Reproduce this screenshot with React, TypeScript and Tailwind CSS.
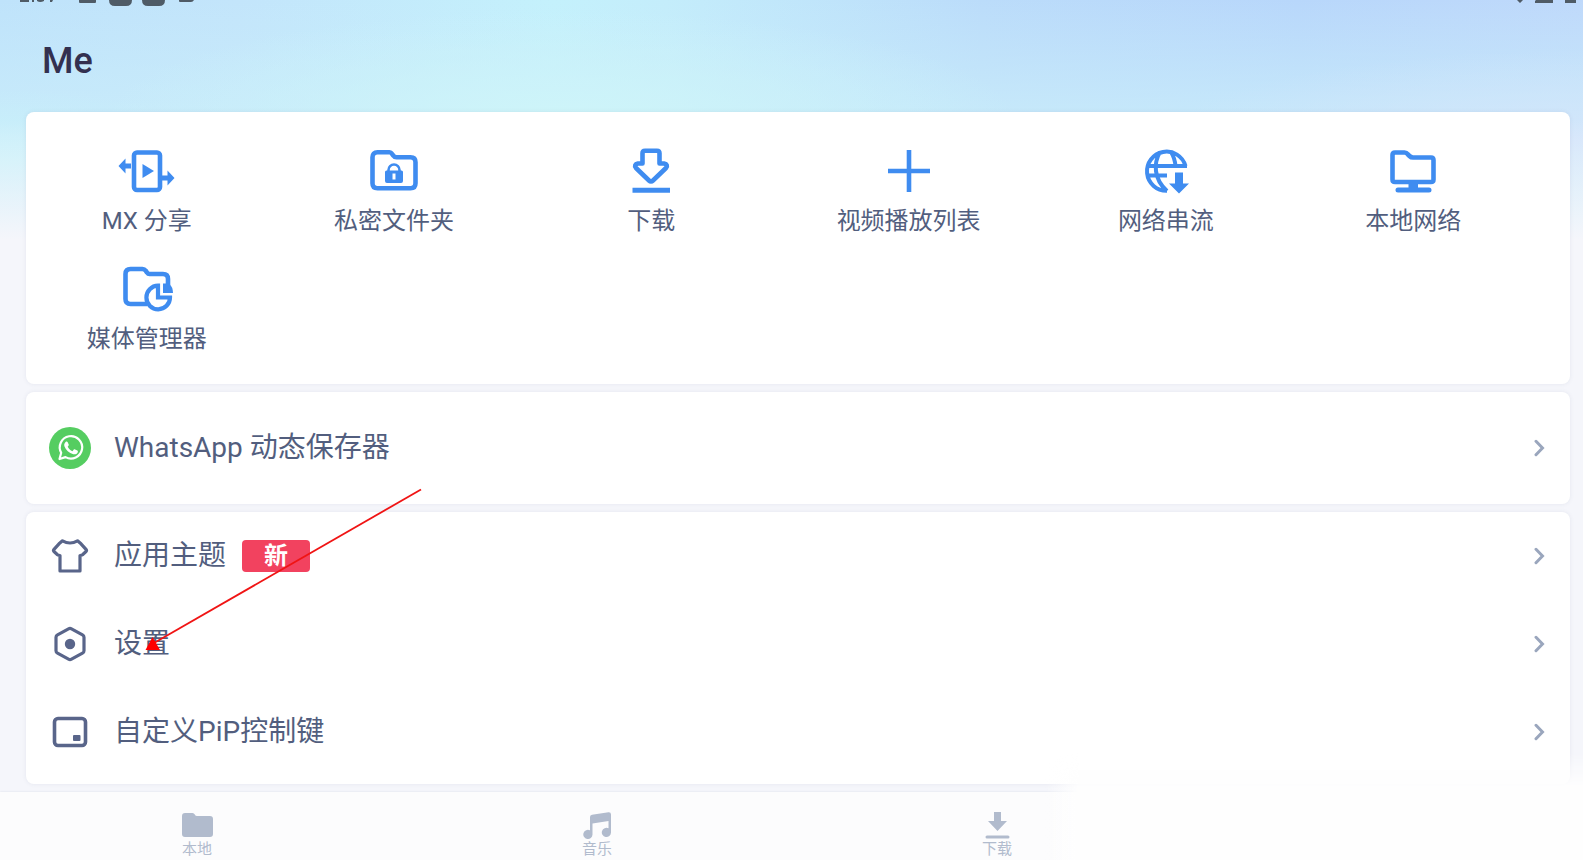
import type { ReactNode } from "react";

const blue = "#3f8cf0";
const slate = "#59658a";

function ShareIcon() {
  return (
    <svg width="60" height="48" viewBox="0 0 60 48" fill="none" aria-hidden="true">
      <rect x="17" y="5.500" width="26" height="37.500" rx="3" stroke={blue} strokeWidth="4.600" />
      <path d="M25.500 17v14l11.500-7z" fill={blue} />
      <path d="M1.500 19l7-7.500V16.500H14v5H8.500V26.500zM57.500 31l-7-7.500v5H45v5h5.500v5z" fill={blue} />
    </svg>
  );
}

function LockFolderIcon() {
  return (
    <svg width="60" height="48" viewBox="0 0 60 48" fill="none" aria-hidden="true">
      <path d="M13.500 5.300h12q1.500 0 2.500 1.500l1.500 2q1 1.500 3 1.500h14q5 0 5 5v21q0 5-5 5h-33q-5 0-5-5v-26q0-5 5-5z" stroke={blue} strokeWidth="4.600" strokeLinejoin="round" />
      <path d="M24.500 25v-2a5.500 5.500 0 0 1 11 0v2" stroke={blue} strokeWidth="2.600" />
      <path fillRule="evenodd" d="M22.500 23.500h15q1.500 0 1.500 1.500v9q0 2-2 2H23q-2 0-2-2v-9q0-1.500 1.500-1.500zM28.500 26.500v6h3v-6z" fill={blue} />
    </svg>
  );
}

function DownloadIcon() {
  return (
    <svg width="60" height="48" viewBox="0 0 60 48" fill="none" aria-hidden="true">
      <path d="M24 3.700h12q2.500 0 2.500 2.500V16.500h4.500q4.500 1 2 4.500L32 33.500q-2 2-4 0L15 21q-2.500-3.500 2-4.500h4.500V6.200q0-2.500 2.500-2.500z" stroke={blue} strokeWidth="4.600" strokeLinejoin="round" />
      <path d="M11.500 43.200H49" stroke={blue} strokeWidth="5" />
    </svg>
  );
}

function PlusIcon() {
  return (
    <svg width="60" height="48" viewBox="0 0 60 48" fill="none" aria-hidden="true">
      <path d="M30 3v42M9 24h42" stroke={blue} strokeWidth="4.600" />
    </svg>
  );
}

function StreamIcon() {
  return (
    <svg width="60" height="48" viewBox="0 0 60 48" fill="none" aria-hidden="true">
      <path
        d="M31 43.800A19.600 19.600 0 1 1 49.500 19M10.500 19H51M10.500 28.500H31M24 5c-6.500 11-6.500 27 7 39M35 5c2.500 4 4 8 4.500 14"
        stroke={blue}
        strokeWidth="4"
      />
      <path d="M39 25.500h8v11h6L43 46.500l-10-10h6z" fill={blue} />
    </svg>
  );
}

function NetworkIcon() {
  return (
    <svg width="60" height="48" viewBox="0 0 60 48" fill="none" aria-hidden="true">
      <path d="M12 5.500h9.500q2 0 3.500 2l1.500 1.500q1.500 1.500 3.500 1.500h18q2.500 0 2.500 2.500v19.500q0 2.500-2.500 2.500H12q-2.500 0-2.500-2.500V8q0-2.500 2.500-2.500z" stroke={blue} strokeWidth="4.600" strokeLinejoin="round" />
      <path d="M25.500 36H35v6h-9.500zM15 40.500h31q2.500 0 2.500 2.500T46 45.500H15q-2.500 0-2.500-2.500t2.500-2.500z" fill={blue} />
    </svg>
  );
}

function MediaManagerIcon() {
  return (
    <svg width="60" height="48" viewBox="0 0 60 48" fill="none" aria-hidden="true">
      <path d="M30 39H13.500q-5 0-5-5V9q0-5 5-5h12q2 0 3 1.500l1.500 2Q31 9 32.500 9H46q5 0 5 5v6" stroke={blue} strokeWidth="4.600" />
      <path d="M41 20.700A11.800 11.800 0 1 0 53 32.500H41z" stroke={blue} strokeWidth="4.200" />
      <path d="M46 18.500h6q4 3.500 4 9.500H46z" fill={blue} />
    </svg>
  );
}

function WhatsAppIcon() {
  return (
    <svg width="42" height="42" viewBox="0 0 42 42" fill="none" aria-hidden="true">
      <circle cx="21" cy="21" r="21" fill="#55cd61" />
      <path d="M10.500 32l1.700-6.200a11.200 11.200 0 1 1 4.300 4.300z" stroke="#fff" strokeWidth="2.200" strokeLinejoin="round" />
      <path d="M16.600 15c.8-.8 1.700-.6 2.100.3l1 2.300c.3.700-.2 1.200-1 2.200 1.200 2.200 2.600 3.500 4.800 4.400l1.300-1.600c.4-.5.800-.5 1.300-.2l2.200 1.100c.7.400.7.900.4 1.900-.6 1.500-2.700 2.200-4.300 1.800-4.500-1.100-7.500-4-9-7.900-.5-1.600 0-3.200 1.200-4.300z" fill="#fff" />
    </svg>
  );
}

function ThemeIcon() {
  return (
    <svg width="42" height="42" viewBox="0 0 42 42" fill="none" aria-hidden="true">
      <path
        d="M13.500 5.800q7.500 4.400 15 0l3.500 3 5 5.500q1 1.200 0 2.200l-3.500 3.200q-1 .8-2.500.8v15.500H11V20.500q-1.500 0-2.500-.8L5 16.500q-1-1 0-2.200l5-5.500z"
        stroke={slate}
        strokeWidth="3.200"
        strokeLinejoin="round"
      />
    </svg>
  );
}

function SettingsIcon() {
  return (
    <svg width="42" height="42" viewBox="0 0 42 42" fill="none" aria-hidden="true">
      <path d="M19.500 5.800q1.500-.8 3 0l11 6q1.500.8 1.500 2.500v13.400q0 1.700-1.500 2.500l-11 6q-1.500.8-3 0l-11-6Q7 29.400 7 27.700V14.300q0-1.700 1.500-2.500z" stroke={slate} strokeWidth="3.200" />
      <circle cx="21" cy="21" r="5.200" fill={slate} />
    </svg>
  );
}

function PipIcon() {
  return (
    <svg width="42" height="42" viewBox="0 0 42 42" fill="none" aria-hidden="true">
      <rect x="5.500" y="7.500" width="31" height="27" rx="3.500" stroke={slate} strokeWidth="3.600" />
      <rect x="24" y="24" width="7.500" height="6" rx="1" fill={slate} />
    </svg>
  );
}

function Chevron() {
  return (
    <svg width="12" height="18" viewBox="0 0 12 18" fill="none" aria-hidden="true">
      <path d="M2 2.300L8.500 9 2 15.700" stroke="#9aa6bd" strokeWidth="3" strokeLinecap="round" />
    </svg>
  );
}

const shortcuts: { label: string; icon: ReactNode }[] = [
  { label: "MX 分享", icon: <ShareIcon /> },
  { label: "私密文件夹", icon: <LockFolderIcon /> },
  { label: "下载", icon: <DownloadIcon /> },
  { label: "视频播放列表", icon: <PlusIcon /> },
  { label: "网络串流", icon: <StreamIcon /> },
  { label: "本地网络", icon: <NetworkIcon /> },
  { label: "媒体管理器", icon: <MediaManagerIcon /> },
];

const tabs: { label: string; icon: ReactNode }[] = [
  {
    label: "本地",
    icon: <path d="M4 1h7.500q1.500 0 2.300 1.500.7 1.500 2.200 1.500h13q3 0 3 3v15q0 3-3 3H4q-3 0-3-3V4q0-3 3-3z" />,
  },
  {
    label: "音乐",
    icon: (
      <path d="M9 5q0-2 2-2.300L27.500.200Q30 0 30 2.500V20.500a4.600 4.600 0 1 1-2.500-4.200V9L11.500 11.500V22.500a4.600 4.600 0 1 1-2.500-4.200z" />
    ),
  },
  { label: "下载", icon: <path d="M13 0h7v9h6L16.500 19 7 9h6zM6 23.500h21a1.500 1.500 0 0 1 0 3H6a1.500 1.500 0 0 1 0-3z" /> },
];

function Row({ icon, label, badge, tall }: { icon: ReactNode; label: string; badge?: string; tall?: boolean }) {
  return (
    <button type="button" className={`flex w-full items-center pl-[23px] pr-6 text-left ${tall ? "h-28" : "h-22"}`}>
      {icon}
      <span className="ml-[23px] text-[28px] leading-10">{label}</span>
      {badge && (
        <span className="ml-4 flex h-8 w-17 items-center justify-center rounded bg-[#f2425f] text-2xl font-bold text-white">
          {badge}
        </span>
      )}
      <span className="ml-auto">
        <Chevron />
      </span>
    </button>
  );
}

function Card({ children }: { children: ReactNode }) {
  return <section className="rounded-lg bg-white shadow-[0_0_4px_rgba(80,90,130,0.10)]">{children}</section>;
}

export default function App() {
  return (
    <div className="relative flex min-h-screen flex-col overflow-hidden bg-[#f5f6fb] font-[Roboto,'Noto_Sans_CJK_SC',sans-serif] text-[#525e7e]">
      <div className="absolute inset-x-0 top-0 h-60 bg-[linear-gradient(to_bottom,transparent_50%,#f5f6fb_100%),radial-gradient(ellipse_460px_110px_at_560px_120px,#cef5f9_0%,transparent_100%),radial-gradient(ellipse_240px_70px_at_0px_160px,#c8f1fa_0%,transparent_100%),radial-gradient(ellipse_420px_90px_at_100%_140px,#d3e5fb_0%,transparent_100%),linear-gradient(to_bottom,transparent_0%,#c9ecfa_60%),linear-gradient(to_right,#bfe3fb_0%,#c3e5fb_15%,#c4f1fc_35%,#c4edfb_42%,#bbdcfa_62%,#b8d7fb_82%,#bfd9fb_100%)]" />

      <header className="relative h-28">
        <svg className="absolute left-0 top-0" width="220" height="8" viewBox="0 0 220 8" fill="#4f5b66" aria-hidden="true">
          <path d="M20 0h9v2h-9zM32 0h2v2h-2zM37 1q3 2 7 0V0h-7zM50 0h3l-1 2h-2zM79 0h17v2q0 1-1 1H80q-1 0-1-1zM109 0h23q0 6-6 6h-11q-6 0-6-6zM142 0h23q0 6-6 6h-11q-6 0-6-6zM179 0h15q-1 2-3 2h-11q-1 0-1-1z" />
        </svg>
        <svg className="absolute right-0 top-0" width="70" height="4" viewBox="0 0 70 4" fill="#4f5b66" aria-hidden="true">
          <path d="M4 0h6L7 3zM22 1l1-1h17v3H22zM52 0h11v3H52z" />
        </svg>
        <h1 className="pl-[42px] pt-9 text-4xl leading-[50px] font-medium text-[#33304f]">Me</h1>
      </header>

      <main className="relative flex grow flex-col gap-2 pb-2 pl-[26px] pr-[13px]">
        <Card>
          <div className="grid grid-cols-[12fr_13fr_13fr_13fr_13fr_12fr] gap-y-3 pb-[13px] pl-0.5 pr-[38px] pt-[35px]">
            {shortcuts.map((item) => (
              <button type="button" key={item.label} className="flex h-[106px] flex-col items-center text-2xl leading-8">
                {item.icon}
                <span className="mt-2.5 whitespace-nowrap">{item.label}</span>
              </button>
            ))}
          </div>
        </Card>

        <Card>
          <Row icon={<WhatsAppIcon />} label="WhatsApp 动态保存器" tall />
        </Card>

        <Card>
          <div className="pb-2">
            <Row icon={<ThemeIcon />} label="应用主题" badge="新" />
            <Row icon={<SettingsIcon />} label="设置" />
            <Row icon={<PipIcon />} label="自定义PiP控制键" />
          </div>
        </Card>
      </main>

      <nav className="relative grid h-17 grid-cols-[394fr_406fr_394fr_389fr] bg-[#fcfcfd] text-[#b1bbcd] shadow-[0_0_2px_rgba(80,90,130,0.15)]">
        {tabs.map((tab) => (
          <a key={tab.label} href="#" className="flex flex-col items-center pt-5 text-[15px] leading-5">
            <svg width="33" height="27" viewBox="0 0 33 27" fill="currentColor" aria-hidden="true">
              {tab.icon}
            </svg>
            <span>{tab.label}</span>
          </a>
        ))}
      </nav>

      <div className="pointer-events-none absolute bottom-0 left-[66%] right-0 h-27 bg-[linear-gradient(to_right,transparent,#fefefe_34px)] [mask-image:linear-gradient(to_bottom,transparent,black_36px)]" />

      <svg className="pointer-events-none absolute left-[140px] top-[480px]" width="290" height="180" viewBox="0 0 290 180" aria-hidden="true">
        <path d="M281 9.500L14 163" stroke="#f01414" strokeWidth="1.800" />
        <path d="M12.500 157l7.500 13H5.500z" fill="#ff0000" />
      </svg>
    </div>
  );
}
